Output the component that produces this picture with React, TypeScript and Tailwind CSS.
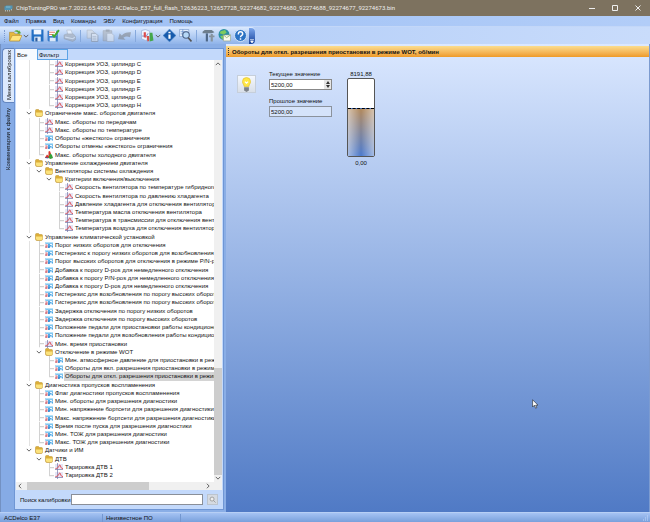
import type { ReactNode } from "react"

type Kind = "folder" | "curve" | "num" | "surface"
type Row = { depth: number; kind: Kind; text: string; last?: boolean; tail?: boolean; selected?: boolean }

const f = (depth: number, text: string, extra = {}): Row => ({ depth, kind: "folder", text, ...extra })
const c = (depth: number, text: string, extra = {}): Row => ({ depth, kind: "curve", text, ...extra })
const n = (depth: number, text: string, extra = {}): Row => ({ depth, kind: "num", text, ...extra })

const rows: Row[] = [
    c(3, "Коррекция УОЗ, цилиндр C"),
    c(3, "Коррекция УОЗ, цилиндр D"),
    c(3, "Коррекция УОЗ, цилиндр E"),
    c(3, "Коррекция УОЗ, цилиндр F"),
    c(3, "Коррекция УОЗ, цилиндр G"),
    c(3, "Коррекция УОЗ, цилиндр H", { last: true }),
    f(1, "Ограничение макс. оборотов двигателя"),
    c(2, "Макс. обороты по передачам"),
    c(2, "Макс. обороты по температуре"),
    n(2, "Обороты «жесткого» ограничения"),
    n(2, "Обороты отмены «жесткого» ограничения"),
    { depth: 2, kind: "surface", text: "Макс. обороты холодного двигателя", last: true },
    f(1, "Управление охлаждением двигателя"),
    f(2, "Вентиляторы системы охлаждения"),
    f(3, "Критерии включения/выключения"),
    c(4, "Скорость вентилятора по температуре гибридного"),
    c(4, "Скорость вентилятора по давлению хладагента"),
    c(4, "Давление хладагента для отключения вентилятора"),
    c(4, "Температура масла отключения вентилятора"),
    c(4, "Температура в трансмиссии для отключения венти"),
    c(4, "Температура воздуха для отключения вентилятора", { last: true }),
    f(1, "Управление климатической установкой"),
    n(2, "Порог низких оборотов для отключения"),
    n(2, "Гистерезис к порогу низких оборотов для возобновления"),
    n(2, "Порог высоких оборотов для отключения в режиме P/N-pos"),
    n(2, "Добавка к порогу D-pos для немедленного отключения"),
    n(2, "Добавка к порогу P/N-pos для немедленного отключения"),
    n(2, "Добавка к порогу D-pos для немедленного отключения"),
    n(2, "Гистерезис для возобновления по порогу высоких оборотов"),
    n(2, "Гистерезис для возобновления по порогу высоких оборотов"),
    n(2, "Задержка отключения по порогу низких оборотов"),
    n(2, "Задержка отключения по порогу высоких оборотов"),
    n(2, "Положение педали для приостановки работы кондиционер"),
    n(2, "Положение педали для возобновления работы кондиционер"),
    c(2, "Мин. время приостановки"),
    f(2, "Отключение в режиме WOT"),
    n(3, "Мин. атмосферное давление для приостановки в режим"),
    n(3, "Обороты для вкл. разрешения приостановки в режиме"),
    n(3, "Обороты для откл. разрешения приостановки в режиме", { last: true, selected: true }),
    f(1, "Диагностика пропусков воспламенения"),
    n(2, "Флаг диагностики пропусков воспламенения"),
    n(2, "Мин. обороты для разрешения диагностики"),
    n(2, "Мин. напряжение бортсети для разрешения диагностики"),
    n(2, "Макс. напряжение бортсети для разрешения диагностики"),
    n(2, "Время после пуска для разрешения диагностики"),
    n(2, "Мин. ТОЖ для разрешения диагностики"),
    n(2, "Макс. ТОЖ для разрешения диагностики", { last: true }),
    f(1, "Датчики и ИМ"),
    f(2, "ДТВ", { tail: true }),
    c(3, "Тарировка ДТВ 1", { tail: true }),
    c(3, "Тарировка ДТВ 2", { tail: true, last: true }),
]

const Folder = () => (
    <svg viewBox="0 0 16 16" className="size-2">
        <path d="M1 3q0-2 2-2h4l2 2h4q2 0 2 2v7q0 3-3 3H4q-3 0-3-3z" fill="#dcae38" stroke="#b8912f" />
        <path d="M2 7h13v4q0 3-3 3H5q-3 0-3-3z" fill="#fbe27c" />
    </svg>
)

const Curve = () => (
    <svg viewBox="0 0 16 16" className="size-2">
        <path d="M0 2h16v11H0z" fill="#e6e6f6" />
        <path d="M5 0v16M0 13h16" stroke="#7679a8" strokeWidth="1.4" />
        <path d="M1 11c4 0 6-2 7-5 1-3 2-3 3 0 1 4 2 5 5 5" fill="none" stroke="#e0545c" strokeWidth="2" />
    </svg>
)

const Num = () => (
    <svg viewBox="0 0 16 16" className="size-2">
        <path d="M1 2h15v12H1z" fill="#4fa9e6" />
        <path d="M1 2h15v3H1z" fill="#b4e1f8" />
        <path d="M0 6h6v8H0z" fill="#f3dde4" />
        <path d="M1 8h3v5H1v-2h3" fill="none" stroke="#d0505c" strokeWidth="1.2" />
        <path d="M10 7h4v2l-4 4h5" fill="none" stroke="#fff" strokeWidth="1.8" />
        <path d="M7 12h2" stroke="#1d4d9c" strokeWidth="2" />
    </svg>
)

const Surface = () => (
    <svg viewBox="0 0 16 16" className="size-2">
        <path d="M0 13l4-6 3 3V1l3-1 2 6v8H0z" fill="#d8372d" />
        <path d="M8 10l3-5 3 3 2 6-5 2-4-2z" fill="#35a13b" />
        <path d="M0 14l4-2 3 3z" fill="#3358b8" />
    </svg>
)

const icons: Record<Kind, ReactNode> = { folder: <Folder />, curve: <Curve />, num: <Num />, surface: <Surface /> }

const Chevron = ({ className = "" }: { className?: string }) => (
    <svg viewBox="0 0 8 8" className={`size-[6px] shrink-0 ${className}`}>
        <path d="M1 2.5l3 3 3-3" fill="none" stroke="#555" strokeWidth="1.2" />
    </svg>
)

const TreeRow = ({ row }: { row: Row }) => {
    const leaf = row.kind !== "folder"
    return (
        <li className="flex min-h-0 flex-1 items-stretch whitespace-nowrap">
            {Array.from({ length: row.depth - 1 }, (_, i) => (
                <span key={i} className="flex w-[10px] shrink-0 justify-center">
                    {i === 0 && !row.tail && <i className="w-px bg-[#e2e2e2]" />}
                </span>
            ))}
            <span className="flex w-[10px] shrink-0 items-center justify-center">
                {leaf ? (
                    <svg viewBox="0 0 10 8" preserveAspectRatio="none" className="h-full w-full">
                        <path d={row.last ? "M5.5 0v4.5H10" : "M5.5 0v8M5.5 4.5H10"} fill="none" stroke="#d2d2d2" />
                    </svg>
                ) : (
                    <Chevron />
                )}
            </span>
            <span className="flex w-[10px] shrink-0 items-center justify-center">{icons[row.kind]}</span>
            <span className={`flex items-center pl-px ${row.selected ? "flex-1 bg-[#d4d4d4]" : ""}`}>{row.text}</span>
        </li>
    )
}

const ToolButton = ({ label, dim, children }: { label: string; dim?: boolean; children: ReactNode }) => (
    <button aria-label={label} className={`flex w-4 shrink-0 items-center justify-center ${dim ? "opacity-50 grayscale" : ""}`}>
        <svg viewBox="0 0 24 24" className="size-[13px]">{children}</svg>
    </button>
)

const Sep = () => <span className="mx-[3px] h-3 w-px shrink-0 bg-[#86a9dd]" />

const Toolbar = () => (
    <div className="flex h-[18px] shrink-0 items-stretch border-t border-[#c3d7f8] bg-linear-to-r from-[#a9c7f6] to-[#c9dcfb]">
        <div className="flex items-center rounded-r-sm bg-linear-to-b from-[#dceafe] to-[#90b4ea] pl-1">
            <span className="mr-[2px] h-3 border-l border-dotted border-[#7d9bd0]" />
            <ToolButton label="Открыть">
                <path d="M1 6h8l2 3h9v13H1z" fill="#e5b73d" stroke="#a8842c" />
                <path d="M6 12h18l-5 10H1z" fill="#ffe47e" stroke="#b08a2b" />
                <path d="M9 5q6-5 10 0V2l3 6-7 1 2-2q-4-3-8-2z" fill="#54a834" />
            </ToolButton>
            <Chevron />
            <ToolButton label="Сохранить">
                <path d="M1 1h22v22H3l-2-2z" fill="#236fc4" />
                <path d="M5 1h14v9H5z" fill="#f1f6ff" />
                <path d="M6 14h12v9H6z" fill="#dce8f8" />
                <path d="M8 16h4v7H8z" fill="#2c5c9f" />
            </ToolButton>
            <ToolButton label="Сохранить как">
                <path d="M1 3h19v20H3l-2-2z" fill="#3b7cc9" />
                <path d="M4 3h13v10H4z" fill="#fff" />
                <path d="M5 16h11v7H5z" fill="#dce8f8" />
                <path d="M4 6h11M4 10h7" stroke="#dd7a68" strokeWidth="2" />
                <path d="M10 10l3 4L22 2" fill="none" stroke="#42a92f" strokeWidth="3.5" />
            </ToolButton>
            <ToolButton label="Печать" dim>
                <path d="M7 2h8l3 9H9z" fill="#fff" stroke="#888" />
                <path d="M2 11l5-2h12l4 5v6l-5 3-16-5z" fill="#a7a7a7" stroke="#777" />
                <path d="M4 15l14 3 4-3" fill="none" stroke="#eee" strokeWidth="2" />
            </ToolButton>
            <Sep />
            <ToolButton label="Копировать" dim>
                <path d="M2 2h9l4 4v11H2z" fill="#ddd" stroke="#888" />
                <path d="M10 8h8l4 4v11H10z" fill="#eee" stroke="#777" strokeWidth="1.5" />
                <path d="M12 14h7M12 17h7M12 20h7" stroke="#888" />
            </ToolButton>
            <ToolButton label="Вставить" dim>
                <path d="M2 3h16v19H2z" fill="#aaa" stroke="#777" />
                <path d="M7 1h7v4H7z" fill="#777" />
                <path d="M9 8h9l4 4v11H9z" fill="#eee" stroke="#888" />
            </ToolButton>
            <ToolButton label="Отменить" dim>
                <path d="M0 19l3-11 4 4q6-7 17-6l-2 9q-7-3-12 1l4 4z" fill="#777" />
            </ToolButton>
            <Sep />
            <ToolButton label="График">
                <path d="M1 3l7-2 8 3v14l-8 3-7-3z" fill="#eef4ff" stroke="#8aa2cf" />
                <path d="M2 13h8l3-5" fill="none" stroke="#6a7cc0" strokeWidth="1.5" />
                <path d="M5 15V6h4v10z" fill="#dc4c4c" />
                <path d="M10 13h5v9l-3 1z" fill="#d8524a" />
                <path d="M16 7h5l2 14-7 2z" fill="#45a74b" />
            </ToolButton>
            <Chevron />
            <ToolButton label="Информация">
                <path d="M12 0l12 12-12 12L0 12z" fill="#175bac" stroke="#6ea1d8" />
                <path d="M12 10v8M12 5v3" stroke="#fff" strokeWidth="4" />
            </ToolButton>
            <ToolButton label="Поиск">
                <path d="M1 1h17v13H1z" fill="#e5effd" stroke="#668bc3" />
                <path d="M3 5h13M3 9h13M7 1v13" stroke="#4375bd" />
                <circle cx="13" cy="11" r="6" fill="#b6d8f7" stroke="#4b6287" strokeWidth="2" />
                <path d="M17 16l6 7" stroke="#555" strokeWidth="3" />
            </ToolButton>
            <Sep />
            <ToolButton label="Настройки">
                <path d="M1 5l4-3h13l5 4-5 2H1z" fill="#6e7e8d" />
                <path d="M7 8h4v15H7z" fill="#4e6787" />
                <path d="M16 9h4v14h-4zM13 12h10v3H13z" fill="#86939e" />
            </ToolButton>
            <ToolButton label="Обновление">
                <circle cx="11" cy="10" r="10" fill="#2b8fa3" />
                <path d="M5 4l8-2 3 5-6 3-7-2zM4 13l6-1 1 7-4-1z" fill="#7dcb5e" />
                <path d="M10 11h13v11H10z" fill="#fbfbf0" stroke="#8b9b76" />
                <path d="M10 11l6 5 7-5" fill="none" stroke="#8fae6a" strokeWidth="1.5" />
            </ToolButton>
            <ToolButton label="Справка">
                <circle cx="12" cy="12" r="11" fill="#2b73c4" stroke="#e6f2ff" strokeWidth="1.5" />
                <path d="M8 10q0-5 4-5t4 4c0 3-4 3-4 6M12 17v3" fill="none" stroke="#fff" strokeWidth="2.8" />
            </ToolButton>
            <button aria-label="Ещё" className="ml-px flex h-4 w-[6px] items-end justify-center rounded-r-sm bg-linear-to-b from-[#7ba5eb] to-[#16419a] pb-px">
                <svg viewBox="0 0 6 6" className="size-1"><path d="M0 1h6M1 3h4l-2 3z" stroke="#fff" fill="#fff" /></svg>
            </button>
        </div>
    </div>
)

const menu = ["Файл", "Правка", "Вид", "Команды", "ЭБУ", "Конфигурация", "Помощь"]

const App = () => {
    return (
        <div className="flex h-screen flex-col overflow-hidden bg-[#8aaee6] font-['Liberation_Sans',Arial,sans-serif] text-[6px] leading-[8px] text-[#111]">
            <header className="flex h-4 shrink-0 items-center bg-[#7d725f] pl-1 text-[#eee]">
                <svg viewBox="0 0 18 14" className="mr-[3px] h-[7px] w-[9px]">
                    <path d="M1 3l4-2h12v6l-5 3H1z" fill="#5294b3" />
                    <path d="M3 10v3M7 10v3M11 10v3M15 8v3" stroke="#b7c8cd" strokeWidth="1.6" />
                    <path d="M4 4h9" stroke="#bce5ef" />
                </svg>
                <h1 className="flex-1 truncate font-['Roboto',sans-serif]">
                    ChipTuningPRO ver.7.2022.65.4093 - ACDelco_E37_full_flash_12636223_12657728_92274682_92274680_92274688_92274677_92274673.bin
                </h1>
                <div className="flex items-center">
                    <button aria-label="Свернуть" className="flex w-[23px] justify-center"><svg viewBox="0 0 6 6" className="size-[6px]"><path d="M0 3.5h6" stroke="#eee" /></svg></button>
                    <button aria-label="Развернуть" className="flex w-[23px] justify-center"><svg viewBox="0 0 6 6" className="size-[6px]"><path d="M.5.5h5v5h-5z" fill="none" stroke="#eee" /></svg></button>
                    <button aria-label="Закрыть" className="flex w-6 justify-center"><svg viewBox="0 0 6 6" className="size-[6px]"><path d="M.5.5l5 5M5.5.5l-5 5" stroke="#eee" /></svg></button>
                </div>
            </header>

            <nav className="flex h-[10px] shrink-0 items-center gap-[7px] bg-linear-to-r from-[#9dbff4] to-[#b2cdf8] pl-1">
                {menu.map((item) => (
                    <button key={item}>{item}</button>
                ))}
            </nav>

            <Toolbar />

            <div className="flex min-h-0 flex-1">
                {/* Side tabs */}
                <div role="tablist" className="flex w-[14px] shrink-0 flex-col items-end border-l border-[#7391c2] bg-[#86abe5] pt-1">
                    <button role="tab" aria-selected="true" className="flex h-[55px] w-3 items-center justify-center rounded-l-sm border border-r-0 border-[#6486c0] bg-[#dce9fd]">
                        <span className="rotate-180 whitespace-nowrap [writing-mode:vertical-rl]">Меню калибровок</span>
                    </button>
                    <button role="tab" aria-selected="false" className="flex h-[72px] w-3 items-center justify-center">
                        <span className="rotate-180 whitespace-nowrap [writing-mode:vertical-rl]">Комментарии к файлу</span>
                    </button>
                </div>

                <aside className="my-[2px] mt-1 flex w-[210px] shrink-0 flex-col border border-[#6f96d4] bg-[#c3d9fb] px-px">
                    <div role="tablist" className="flex h-[11px] shrink-0">
                        <button role="tab" aria-selected="true" className="w-[21px] bg-[#f6faff] pl-px text-left">Все</button>
                        <button role="tab" aria-selected="false" className="w-[31px] border border-[#5ba3e6] bg-[#cfe0f9] pl-px text-left">Фильтр</button>
                    </div>
                    <div className="flex min-h-0 flex-1 bg-white">
                        <ul className="flex min-w-0 flex-1 flex-col overflow-hidden pb-[3px] pl-2">
                            {rows.map((row, i) => (
                                <TreeRow key={i} row={row} />
                            ))}
                        </ul>
                        <div className="flex w-2 shrink-0 flex-col items-center bg-[#f0f0f0] py-px">
                            <Chevron className="rotate-180" />
                            <div className="flex-[294]" />
                            <div className="w-full flex-[105] bg-[#cdcdcd]" />
                            <Chevron />
                        </div>
                    </div>
                    <div className="flex h-2 shrink-0 items-center bg-[#f0f0f0] px-px">
                        <Chevron className="rotate-90" />
                        <div className="ml-1 h-full flex-[122] bg-[#cdcdcd]" />
                        <div className="flex-[56]" />
                        <Chevron className="mr-[10px] -rotate-90" />
                    </div>
                    <div className="flex h-[19px] shrink-0 items-center pr-1 pl-1">
                        <label htmlFor="search" className="w-[51px] whitespace-nowrap">Поиск калибровки</label>
                        <input id="search" className="h-[11px] min-w-0 flex-1 border border-[#8a8f98] bg-white px-px" />
                        <button aria-label="Найти" className="ml-1 flex size-[11px] items-center justify-center border border-[#bcc4ce] bg-[#d5dae1]">
                            <svg viewBox="0 0 8 8" className="size-[7px]"><circle cx="3.5" cy="3.5" r="2.3" fill="#eee" stroke="#999" /><path d="M5 5l2.5 2.5" stroke="#999" /></svg>
                        </button>
                    </div>
                </aside>

                {/* Value editor */}
                <main className="ml-[2px] flex min-w-0 flex-1 flex-col border-r border-[#7c9bd0] bg-linear-to-b from-[#dbe8ff] via-[#95b2e4] to-[#507ac5] pt-[2px]">
                    <h2 className="flex h-[11px] shrink-0 items-center bg-linear-to-b from-[#fbdd8d] to-[#ee9a25] pl-[2px] font-bold whitespace-nowrap">
                        <span className="mr-[3px] h-[7px] border-l border-dotted border-[#333]" />
                        Обороты для откл. разрешения приостановки в режиме WOT, об/мин
                    </h2>
                    <div className="flex items-start pt-[13px] pl-[11px]">
                        <button aria-label="Подсказка" className="mt-[5px] flex h-[18px] w-[19px] items-center justify-center border border-[#c6cfdb] bg-linear-to-b from-[#f4f8ff] to-[#d9dfe8]">
                            <svg viewBox="0 0 16 20" className="h-4 w-[13px]">
                                <path d="M3 7a5 5 0 1110 0c0 3-2 3-2 6H5c0-3-2-3-2-6z" fill="#ffe744" stroke="#e8c737" />
                                <path d="M6 7l2 2 2-2" fill="none" stroke="#fff" strokeWidth="1.5" />
                                <path d="M5 14h6v4l-3 2-3-2z" fill="#7d8288" />
                            </svg>
                        </button>
                        <div className="ml-[13px] flex w-[63px] flex-col">
                            <label htmlFor="current">Текущее значение</label>
                            <div className="mt-px flex h-[11px] border border-[#888] bg-white">
                                <input id="current" defaultValue="5200,00" className="min-w-0 flex-1 px-px" />
                                <div className="flex w-[7px] flex-col bg-[#e6e6e6]">
                                    <button aria-label="Больше" className="flex flex-1 items-center justify-center"><svg viewBox="0 0 4 3" className="h-[3px] w-1"><path d="M0 3l2-3 2 3z" fill="#333" /></svg></button>
                                    <button aria-label="Меньше" className="flex flex-1 items-center justify-center"><svg viewBox="0 0 4 3" className="h-[3px] w-1"><path d="M0 0l2 3 2-3z" fill="#333" /></svg></button>
                                </div>
                            </div>
                            <label htmlFor="previous" className="mt-[7px]">Прошлое значение</label>
                            <input id="previous" readOnly defaultValue="5200,00" className="mt-px h-[11px] w-full border border-[#8b929c] bg-[#d5e3fa] px-px" />
                        </div>
                        <div className="ml-[15px] flex w-7 flex-col items-center">
                            <span>8191,88</span>
                            <div className="flex h-[79px] w-full flex-col rounded-xs border border-[#555] bg-white">
                                <div className="flex-[3]" />
                                <div className="flex-[5] border-t border-dashed border-black bg-linear-to-b from-[#b1885a] to-[#4a79cd]">
                                    <div className="h-full bg-linear-to-r from-white/50 via-transparent to-white/50" />
                                </div>
                            </div>
                            <span className="mt-[2px]">0,00</span>
                        </div>
                    </div>
                </main>
            </div>

            <footer className="flex h-[10px] shrink-0 items-center border-t border-[#b7cff5] bg-linear-to-b from-[#a5c3f3] to-[#79a0dc]">
                <span className="w-[103px] border-r border-[#7397d0] pl-1">ACDelco E37</span>
                <span className="w-[78px] border-r border-[#7397d0] pl-[3px]">Неизвестное ПО</span>
                <svg viewBox="0 0 6 6" className="mr-px ml-auto size-[6px]"><path d="M4 1h1M2 3h1M4 3h1M0 5h1M2 5h1M4 5h1" stroke="#c4d9fa" /></svg>
            </footer>

            <svg viewBox="0 0 10 16" className="absolute top-[399px] left-[532px] h-[10px] w-[6px]">
                <path d="M1 1v12l3-3 2 5 2-1-2-4h4z" fill="#fff" stroke="#222" />
            </svg>
        </div>
    )
}

export default App
